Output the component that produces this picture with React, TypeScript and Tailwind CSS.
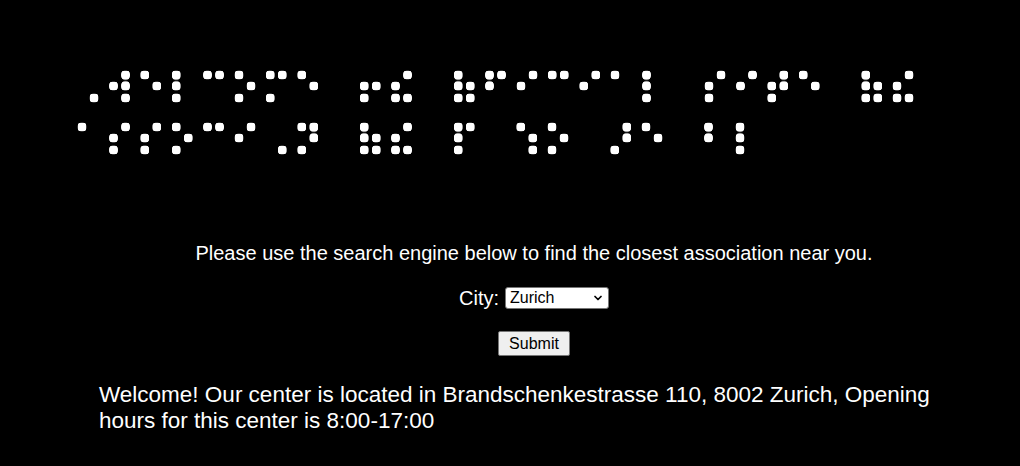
import { ChevronDown } from "lucide-react"

const brailleText =
  "⠠⠺⠑⠇⠉⠕⠍⠑ ⠖⠮ ⠷⠋⠊⠉⠊⠁⠇ ⠎⠊⠞⠑ ⠷⠮ ⠁⠎⠎⠕⠉⠊⠠⠝ ⠷⠮ ⠏ ⠱⠕ ⠜⠑ ⠃⠇"

export default function App() {
  return (
    <div className="min-h-screen bg-black text-white pl-12 font-['Liberation_Sans',Arial,sans-serif]">
      {/* braille heading, blur + contrast rounds off the square dots */}
      <h1 className="h-[168px] pt-[64px] pl-[25px] pr-[45px] bg-black blur-[1.4px] contrast-[6] text-[41px] leading-[52px] font-normal font-['DejaVu_Sans',sans-serif] tracking-[1.35px] [word-spacing:16.8px] [-webkit-text-stroke:2.5px_white]">
        {brailleText}
      </h1>

      <div className="mt-[74px] flex flex-col items-center">
        <p className="text-[20px] leading-[23px]">
          Please use the search engine below to find the closest association near you.
        </p>

        <form className="mt-[22px] flex flex-col items-center">
          <label className="flex items-center h-[22px] gap-[6px] text-[20px]">
            City:
            <span className="relative inline-block">
              <select
                defaultValue="zurich"
                className="appearance-none block w-[104px] h-[22px] bg-white text-black text-[16px] leading-[20px] pl-[4px] border border-[#767676] rounded-[3px] outline-none"
              >
                <option value="zurich">Zurich</option>
                <option value="geneva">Geneva</option>
                <option value="basel">Basel</option>
                <option value="bern">Bern</option>
                <option value="lausanne">Lausanne</option>
              </select>
              <ChevronDown
                className="absolute right-[5px] top-[5px] w-[12px] h-[12px] text-black pointer-events-none"
                strokeWidth={3.5}
              />
            </span>
          </label>

          <button
            type="button"
            className="mt-[22px] h-[25px] px-[10px] text-[16px] leading-[18px] text-black bg-[#efefef] border border-[#767676] rounded-[2px]"
          >
            Submit
          </button>
        </form>
      </div>

      <p className="mt-[26px] pl-[51px] pr-[51px] text-[22.5px] leading-[26px]">
        Welcome! Our center is located in Brandschenkestrasse 110, 8002 Zurich, Opening hours for
        this center is 8:00-17:00
      </p>
    </div>
  )
}
